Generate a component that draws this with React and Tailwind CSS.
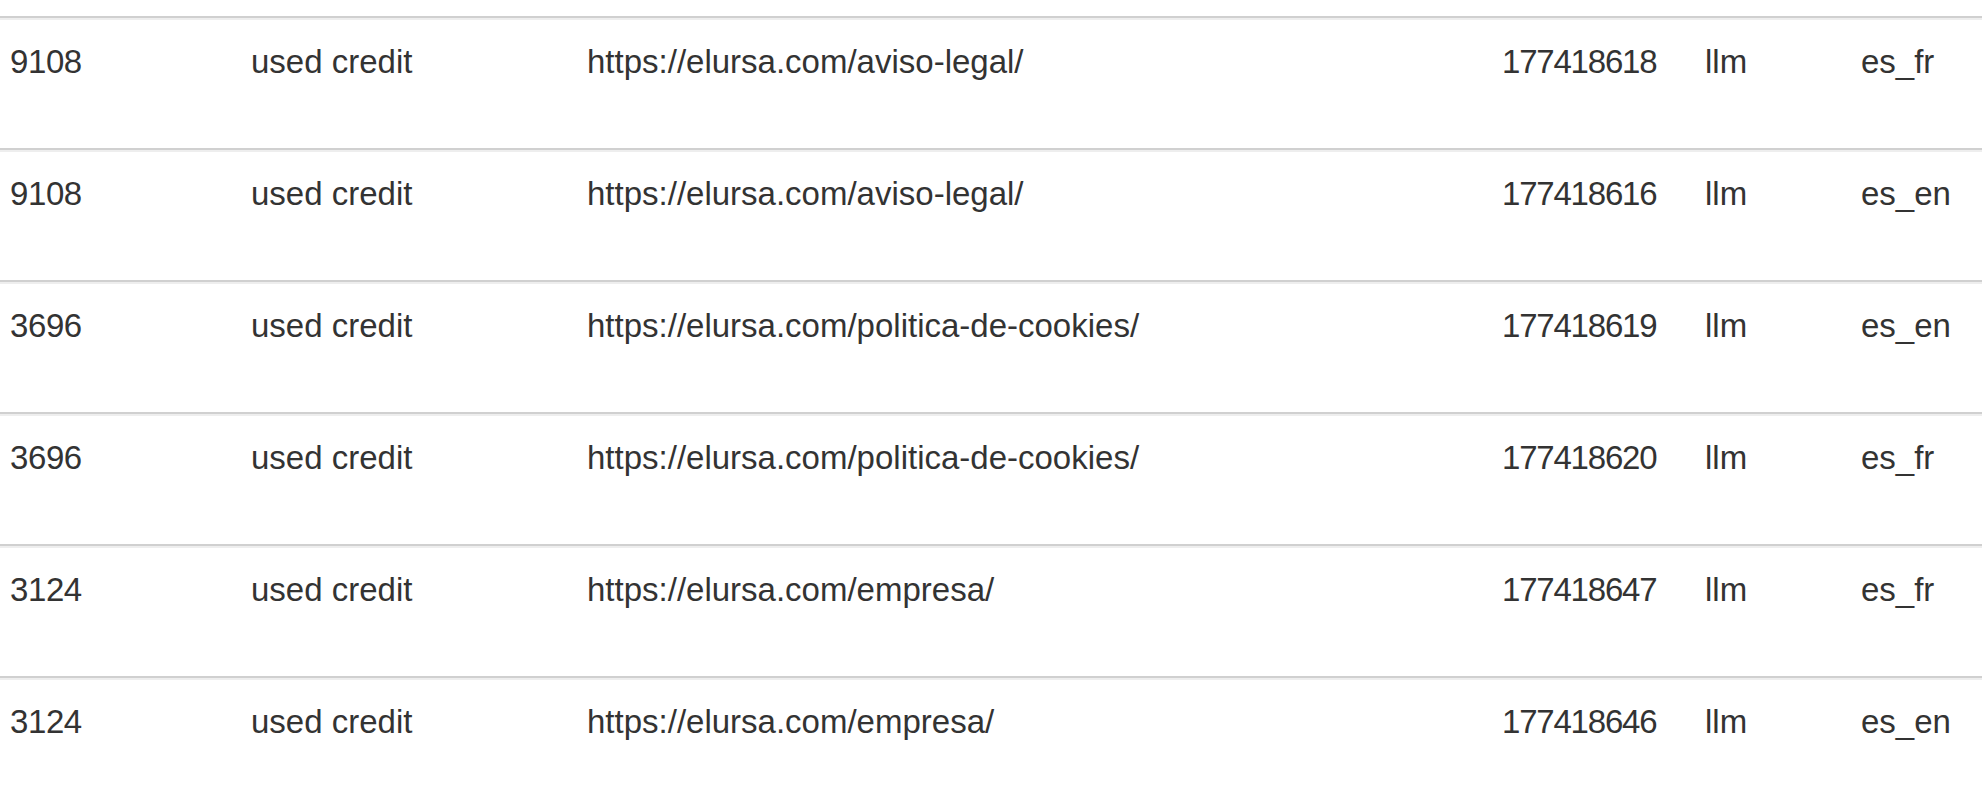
import React from "react";

const rows = [
  ["9108", "used credit", "https://elursa.com/aviso-legal/", "177418618", "llm", "es_fr"],
  ["9108", "used credit", "https://elursa.com/aviso-legal/", "177418616", "llm", "es_en"],
  ["3696", "used credit", "https://elursa.com/politica-de-cookies/", "177418619", "llm", "es_en"],
  ["3696", "used credit", "https://elursa.com/politica-de-cookies/", "177418620", "llm", "es_fr"],
  ["3124", "used credit", "https://elursa.com/empresa/", "177418647", "llm", "es_fr"],
  ["3124", "used credit", "https://elursa.com/empresa/", "177418646", "llm", "es_en"],
];

export default function App() {
  return (
    <div
      className="w-[1982px] h-[790px] overflow-hidden bg-white text-[#333333] text-[33px] leading-[38px]"
      style={{ fontFamily: '"Liberation Sans", Arial, sans-serif' }}
    >
      <div className="h-[16px]" />
      {rows.map((r, i) => (
        <div key={i} className="border-t-2 border-[#d0d0d0]">
          <div className="border-t-2 border-[#eeeeee] h-[130px] pt-[23px] pl-[10px] grid grid-cols-[241px_336px_915px_203px_156px_1fr]">
            <div className="whitespace-nowrap tracking-[-0.4px]">{r[0]}</div>
            <div className="whitespace-nowrap">{r[1]}</div>
            <div className="whitespace-nowrap">{r[2]}</div>
            <div className="whitespace-nowrap tracking-[-1.2px]">{r[3]}</div>
            <div className="whitespace-nowrap">{r[4]}</div>
            <div className="whitespace-nowrap">{r[5]}</div>
          </div>
        </div>
      ))}
    </div>
  );
}
